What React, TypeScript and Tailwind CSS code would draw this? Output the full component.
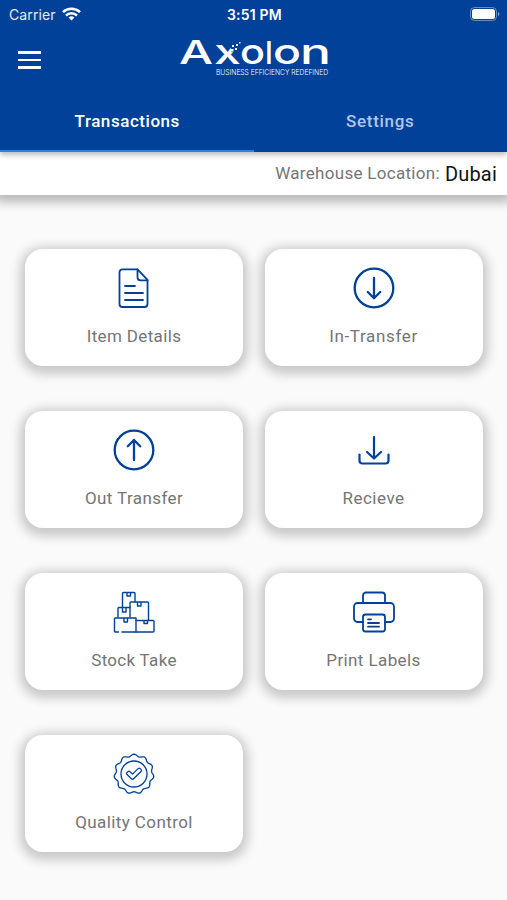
import type { ReactNode } from "react";

function ItemIcon() {
  return (
    <>
      <path d="M9 2.300h15.500l10 10.500v24.200a3 3 0 0 1-3 3H9.500a3 3 0 0 1-3-3V5.300a3 3 0 0 1 3-3Z" />
      <path d="M24.500 2.300v8a3 3 0 0 0 3 3h7M12 19h10M12 26h18M12 33h18" />
    </>
  );
}

function InIcon() {
  return (
    <g strokeWidth="2.3">
      <circle cx="21" cy="21" r="19.300" />
      <path d="M21 11v20M14.800 25l6.200 6.200 6.200-6.200" />
    </g>
  );
}

function OutIcon() {
  return (
    <g strokeWidth="2.3">
      <circle cx="21" cy="21" r="19.300" />
      <path d="M21 31V11M14.800 17.200 21 11l6.200 6.200" />
    </g>
  );
}

function ReceiveIcon() {
  return (
    <g strokeWidth="2.2">
      <path d="M21 8v21M14 23l7 6.500 7-6.500M6.500 25.500v6a3 3 0 0 0 3 3h23a3 3 0 0 0 3-3v-6" />
    </g>
  );
}

function StockIcon() {
  return (
    <g strokeWidth="1.4">
      <path d="M9.500 16V2.500a1 1 0 0 1 1-1H21a1 1 0 0 1 1 1v8M14 1.500v3.500h3.500V1.500" />
      <path d="M17 26V12a1 1 0 0 1 1-1h16.500a1 1 0 0 1 1 1v17M24.500 11v4h3.500v-4" />
      <path d="M5 26v-8.500a1 1 0 0 1 1-1h11M9.500 17v4H13v-4" />
      <path d="M5.500 41H2.500a1 1 0 0 1-1-1V28a1 1 0 0 1 1-1h20.500v14H9M11 27v4h3.500v-4" />
      <path d="M23 29.500h17a1 1 0 0 1 1 1V40a1 1 0 0 1-1 1H23M31 29.500v3h3.500v-3" />
    </g>
  );
}

function PrintIcon() {
  return (
    <g strokeWidth="1.8">
      <path d="M10 11.500V4.500a3 3 0 0 1 3-3h16a3 3 0 0 1 3 3v7" />
      <path d="M10 31H4.500a3.500 3.500 0 0 1-3.500-3.500v-12a3.500 3.500 0 0 1 3.500-3.500h33a3.500 3.500 0 0 1 3.500 3.500v12a3.500 3.500 0 0 1-3.500 3.500H32" />
      <rect x="10" y="23.500" width="22" height="17" rx="2.500" />
      <path d="M15 28.300h3M15 32h11M15 35.700h11" />
    </g>
  );
}

function QualityIcon() {
  // wavy rim with eleven lobes
  const rim = Array.from({ length: 132 }, (_, i) => {
    const a = (i / 132) * Math.PI * 2;
    const r = 18.800 + 1.100 * Math.cos(a * 11);
    return `${(21 + r * Math.sin(a)).toFixed(2)},${(21 - r * Math.cos(a)).toFixed(2)}`;
  }).join(" ");

  return (
    <g strokeWidth="1.300">
      <polygon points={rim} />
      <circle cx="21" cy="21" r="13" />
      <path d="m13.800 19.800 1.100-1.100a1.500 1.500 0 0 1 2.100 0l2.500 2.400 5.600-5.500a1.500 1.500 0 0 1 2.100 0l.8.8a1.500 1.500 0 0 1 0 2.100l-7.400 7.300a1.500 1.500 0 0 1-2.200 0l-4.600-4.500a1.100 1.100 0 0 1 0-1.500Z" />
    </g>
  );
}

const cards: { label: string; tracking: string; icon: ReactNode }[] = [
  { label: "Item Details", tracking: "tracking-[0.35px]", icon: <ItemIcon /> },
  { label: "In-Transfer", tracking: "tracking-[0.65px]", icon: <InIcon /> },
  { label: "Out Transfer", tracking: "tracking-[0.4px]", icon: <OutIcon /> },
  { label: "Recieve", tracking: "tracking-[0.5px]", icon: <ReceiveIcon /> },
  { label: "Stock Take", tracking: "tracking-[0.3px]", icon: <StockIcon /> },
  { label: "Print Labels", tracking: "tracking-[0.4px]", icon: <PrintIcon /> },
  { label: "Quality Control", tracking: "tracking-[0.4px]", icon: <QualityIcon /> },
];

function Logo() {
  return (
    <svg width="152" height="64" viewBox="0 -14 152 64" className="fill-white font-['Inter',sans-serif]">
      <text y="26" fontSize="32" fontWeight="500">
        <tspan x="1" textLength="34" lengthAdjust="spacingAndGlyphs">A</tspan>
        <tspan x="36" fontSize="34.500" textLength="27" lengthAdjust="spacingAndGlyphs">x</tspan>
        <tspan x="62" fontSize="34.500" textLength="25" lengthAdjust="spacingAndGlyphs">o</tspan>
        <tspan x="87" fontSize="31">l</tspan>
        <tspan x="95" fontSize="34.500" textLength="28" lengthAdjust="spacingAndGlyphs">o</tspan>
        <tspan x="122" fontSize="34.500" textLength="31" lengthAdjust="spacingAndGlyphs">n</tspan>
      </text>
      {/* pixels scattering off the upper arm of the x */}
      <path d="M53 5h9v4l-6 5h-3Z" className="fill-[#014199]" />
      <path d="M48 14h4v4h-4zM53 11h2.500v2.500H53zM57 10h2v2h-2zM54 7h2v2h-2zM58 6h2v2h-2zM61 4h1.500v1.500H61z" />
      <text x="38" y="37" fontSize="7.500" fontWeight="300" textLength="112" lengthAdjust="spacingAndGlyphs">
        BUSINESS EFFICIENCY REDEFINED
      </text>
    </svg>
  );
}

export default function App() {
  return (
    <div className="flex flex-col w-full h-[900px] overflow-hidden bg-[#fafafa] font-['Roboto',sans-serif]">
      <header className="relative z-20 h-[152px] bg-[#014199] text-white shadow-[0_3px_5px_rgba(0,0,0,0.25)]">
        <div className="grid grid-cols-3 items-center h-7 pl-[9px] pr-[7px] font-['Inter',sans-serif] text-[14px]">
          <div className="flex items-center gap-[6px]">
            <span className="tracking-[0.1px] text-white/90">Carrier</span>
            <svg width="19" height="14" viewBox="0 0 19 14" fill="none" stroke="white" strokeWidth="2.500">
              <path d="M1 5.200a12.300 12.300 0 0 1 17 0M4 8.500a8 8 0 0 1 11 0" />
              <path d="m9.500 13.500-3-3a4.500 4.500 0 0 1 6 0Z" fill="white" stroke="none" />
            </svg>
          </div>
          <span className="text-center font-semibold text-[14px] tracking-[0.2px] whitespace-nowrap">3:51 PM</span>
          <svg width="30" height="14" viewBox="0 0 30 14" className="justify-self-end">
            <rect x=".5" y=".5" width="26" height="13" rx="4" fill="none" stroke="white" strokeOpacity=".4" />
            <rect x="2" y="2" width="23" height="10" rx="2.500" fill="white" />
            <path d="M28 5v4q1.500-.5 1.500-2T28 5Z" fill="white" fillOpacity=".5" />
          </svg>
        </div>
        <div className="grid grid-cols-3 items-center h-16 px-[18px]">
          <div className="flex flex-col gap-[5px] w-[23px]">
            <div className="h-[2.500px] bg-white" />
            <div className="h-[2.500px] bg-white" />
            <div className="h-[2.500px] bg-white" />
          </div>
          <div className="flex justify-center -mt-2">
            <Logo />
          </div>
        </div>
        <div className="grid grid-cols-2 h-[60px] text-center text-[17px] font-medium">
          <div className="border-b-2 border-[#1e88e5] pt-[17px] pl-px tracking-[0.550px]">Transactions</div>
          <div className="pt-[17px] tracking-[0.700px] text-[#b0c6e8]">Settings</div>
        </div>
      </header>
      <div className="relative z-10 flex justify-end items-center h-[43px] pr-[10px] gap-[5px] bg-white shadow-[0_3px_10px_4px_rgba(0,0,0,0.27)]">
        <span className="text-[17px] tracking-[0.300px] text-[#757575]">Warehouse Location:</span>
        <span className="text-[20px] tracking-[0.2px] text-[#111]">Dubai</span>
      </div>
      <main className="grid grid-cols-2 gap-x-[21.5px] gap-y-[45px] pl-[25px] pr-[24.5px] pt-[54px]">
        {cards.map((card) => (
          <div
            key={card.label}
            className="flex flex-col items-center h-[117px] pt-[18px] rounded-[18px] bg-white shadow-[0_3px_11px_5px_rgba(0,0,0,0.2)]"
          >
            <svg
              width="42"
              height="42"
              viewBox="0 0 42 42"
              fill="none"
              stroke="#014199"
              strokeWidth="1.800"
              strokeLinecap="round"
              strokeLinejoin="round"
            >
              {card.icon}
            </svg>
            <span className={`mt-[15px] text-[17px] leading-[24px] text-[#757575] ${card.tracking}`}>{card.label}</span>
          </div>
        ))}
      </main>
    </div>
  );
}
